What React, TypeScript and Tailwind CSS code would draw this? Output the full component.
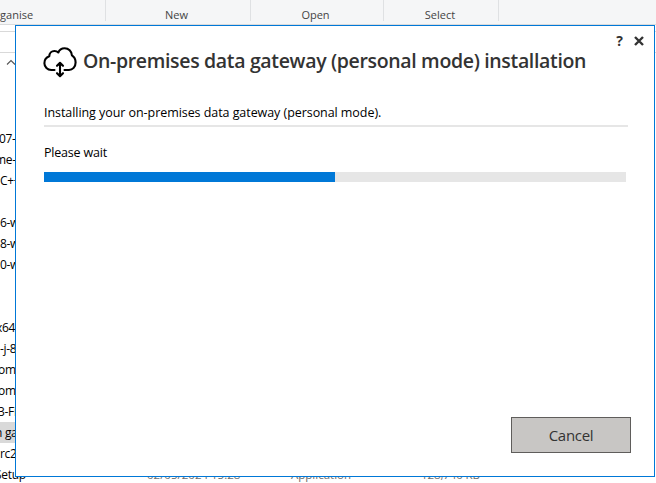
const ribbonGroups = [
  { label: "Organise", box: "w-[106px]", text: "-ml-[13px]", align: "justify-start" },
  { label: "New", box: "w-[145px]", text: "-ml-[3px]", align: "justify-center" },
  { label: "Open", box: "w-[133px]", text: "-ml-[3px]", align: "justify-center" },
  { label: "Select", box: "w-[115px]", text: "-ml-[2px]", align: "justify-center" },
];

const files = [
  { name: "07-v", shift: "-ml-[1px]" },
  { name: "me-v", shift: "-ml-[5px]" },
  { name: "C++", shift: "ml-0" },
  { name: "", shift: "ml-0" },
  { name: "6-w", shift: "ml-0" },
  { name: "8-w", shift: "ml-0" },
  { name: "0-w", shift: "ml-0" },
  { name: "", shift: "ml-0" },
  { name: "", shift: "ml-0" },
  { name: "x64", shift: "-ml-[4px]" },
  { name: "-j-8", shift: "ml-0" },
  { name: "omn", shift: "-ml-[2px]" },
  { name: "omn", shift: "-ml-[2px]" },
  { name: "3-Fi", shift: "-ml-[2px]" },
  { name: "n gat", shift: "-ml-[5px]", selected: true },
  { name: "rc2", shift: "ml-0" },
  {
    name: "Setup",
    shift: "-ml-[5px]",
    date: "02/05/2024 15:28",
    kind: "Application",
    size: "128,740 KB",
  },
];

function CloudIcon() {
  return (
    <svg
      className="h-[32px] w-[34px] shrink-0"
      viewBox="0 0 34 32"
      fill="none"
      stroke="#000"
      strokeWidth="2.1"
      strokeLinecap="round"
      strokeLinejoin="round"
    >
      <path d="M11.500 24H8.200C4.500 24 1.400 20.900 1.400 17.200c0-3.400 2-5.900 4.900-6.900C6.300 7 8.600 5 11.400 5c1.500 0 2.900.5 3.900 1.500C16.300 3.900 18.700 2.200 21.600 2.200c4 0 7.100 2.900 7.300 7.100 2.300 1.400 3.700 4.100 3.700 7.300 0 4.300-3 7.400-6.600 7.400h-4.500" />
      <path d="M17 17v12.800M14 19.800l3-3 3 3M14 27.200l3 3 3-3" />
    </svg>
  );
}

export default function App() {
  return (
    <div className="relative h-[483px] w-[656px] overflow-hidden bg-white font-['Open_Sans','Noto_Sans',sans-serif] text-black">
      <div className="flex h-[25px] border-b border-[#dadbdc] bg-[#f5f6f7] text-[11px] text-[#444]">
        {ribbonGroups.map((group) => (
          <div
            key={group.label}
            className={`flex h-[21px] shrink-0 items-end border-r border-[#dfe1e3] ${group.box} ${group.align}`}
          >
            <span className={`-mb-[1px] whitespace-nowrap leading-[14px] ${group.text}`}>{group.label}</span>
          </div>
        ))}
      </div>
      <div className="mt-[6px] flex h-[22px] border-y border-[#d9d9d9]" />
      <div className="flex h-[75px] pt-[6px] pl-[6px]">
        <svg className="h-[7px] w-[10px]" viewBox="0 0 10 7" fill="none" stroke="#555" strokeWidth="1.1">
          <path d="M1 5.500 5 1.500 9 5.500" />
        </svg>
      </div>
      <div className="flex flex-col text-[12px] tracking-[-0.3px]">
        {files.map((file, i) => (
          <div key={i} className="flex h-[21px] shrink-0 items-center whitespace-nowrap">
            <span className={`mr-[107px] w-[40px] leading-[21px] ${file.selected ? "bg-[#d9d9d9]" : ""}`}>
              <span className={`inline-block ${file.shift}`}>{file.name}</span>
            </span>
            <span className="w-[144px] text-[11.500px] tracking-normal text-[#6d6d6d]">{file.date}</span>
            <span className="w-[130px] text-[11.500px] tracking-normal text-[#6d6d6d]">{file.kind}</span>
            <span className="text-[11.500px] tracking-[-0.1px] text-[#6d6d6d]">{file.size}</span>
          </div>
        ))}
      </div>

      <div className="absolute top-[25px] left-[15px] flex h-[452px] w-[640px] flex-col border border-[#0078d7] bg-white">
        <div className="flex h-[22px] shrink-0 items-end justify-end gap-[11px] pr-[10px] text-[#333]">
          <span className="text-[14px] leading-[15px] font-bold">?</span>
          <svg className="mb-[2px] h-[10px] w-[10px]" viewBox="0 0 10 10" stroke="#333" strokeWidth="2.400">
            <path d="M1 1 9 9M9 1 1 9" />
          </svg>
        </div>
        <div className="flex h-[49px] shrink-0 pl-[27px]">
          <div className="-mt-[2px]">
            <CloudIcon />
          </div>
          <h1 className="-mt-[2px] ml-[6px] text-[19.500px] leading-[30px] font-semibold tracking-[-0.34px] whitespace-nowrap text-[#333]">
            On-premises data gateway (personal mode) installation
          </h1>
        </div>
        <div className="mr-[26px] ml-[28px] flex h-[30px] shrink-0 items-end border-b-2 border-[#e6e6e6]">
          <p className="text-[12.500px] leading-[24px] tracking-[-0.06px] whitespace-nowrap">
            Installing your on-premises data gateway (personal mode).
          </p>
        </div>
        <p className="mt-[16px] ml-[28px] h-[20px] shrink-0 text-[12.500px] leading-[20px] tracking-[-0.2px]">
          Please wait
        </p>
        <div className="mt-[9px] ml-[28px] flex h-[10px] w-[582px] shrink-0 bg-[#e6e6e6]">
          <div className="w-[291px] bg-[#0078d7]" />
        </div>
        <div className="mt-auto flex justify-end pr-[23px] pb-[23px]">
          <button className="h-[36px] w-[120px] border border-[#5f5d5b] bg-[#c8c6c4] text-[15px] tracking-[-0.3px] text-[#333]">
            Cancel
          </button>
        </div>
      </div>
    </div>
  );
}
